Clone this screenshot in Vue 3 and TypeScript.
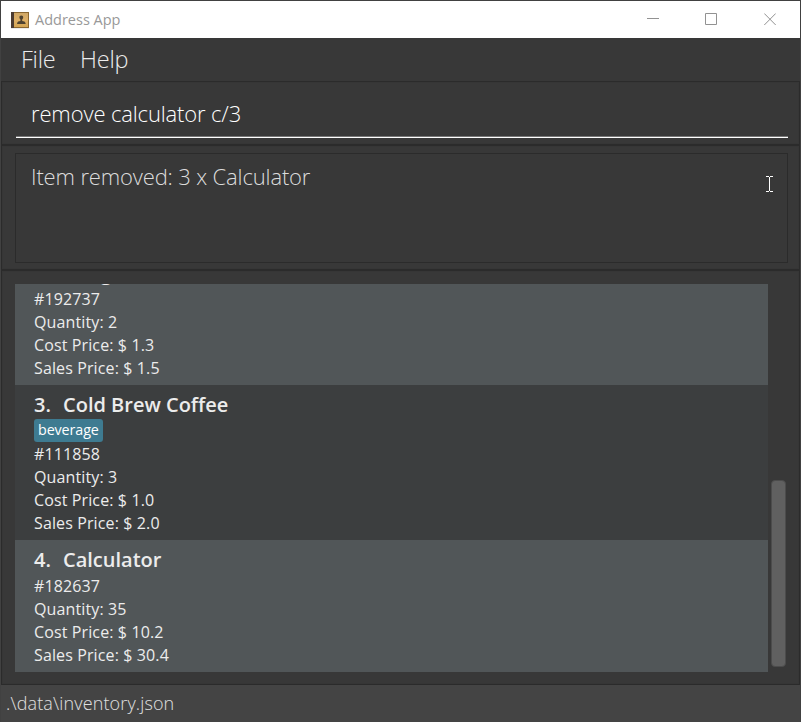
<script setup lang="ts">
interface Item {
  index: number
  name: string
  tags: string[]
  id: string
  quantity: number
  cost: string
  sales: string
}

const menus: string[] = ['File', 'Help']
const command = 'remove calculator c/3'
const result = 'Item removed: 3 x Calculator'
const savePath = '.\\data\\inventory.json'

const items: Item[] = [
  { index: 2, name: 'Bang', tags: [], id: '192737', quantity: 2, cost: '1.3', sales: '1.5' },
  { index: 3, name: 'Cold Brew Coffee', tags: ['beverage'], id: '111858', quantity: 3, cost: '1.0', sales: '2.0' },
  { index: 4, name: 'Calculator', tags: [], id: '182637', quantity: 35, cost: '10.2', sales: '30.4' },
]
</script>

<template>
  <div class="window">
    <header class="titlebar">
      <svg class="app-icon" width="18" height="17" viewBox="0 0 18 17">
        <defs>
          <linearGradient id="cover" x1="0" y1="0" x2="0" y2="1">
            <stop offset="0" stop-color="#cfa766" />
            <stop offset="0.5" stop-color="#deb067" />
            <stop offset="1" stop-color="#d3a452" />
          </linearGradient>
        </defs>
        <rect x="0" y="15.5" width="18" height="1" fill="#d8d8d8" />
        <rect x="0" y="0" width="18" height="16" fill="#8a6630" />
        <rect x="0" y="0" width="3" height="16" fill="#4b3b31" />
        <rect x="3" y="1" width="14" height="14" fill="url(#cover)" />
        <path d="M10.300 3.500c1.400 0 2 .9 1.900 2.100-.1 1-.6 1.500-1 2v1.500c1.500.2 3.300.4 3.500 2.900H6c.2-2.500 1.900-2.700 3.400-2.900V7.600c-.4-.5-.9-1-1-2-.1-1.200.5-2.100 1.900-2.100z" fill="#4e4230" />
      </svg>
      <span class="title">Address App</span>
      <div class="controls">
        <svg width="12" height="13" viewBox="0 0 12 13"><path d="M0 5.500h12" /></svg>
        <svg width="12" height="13" viewBox="0 0 12 13"><path d="M.5.500h11v11H.5z" /></svg>
        <svg width="12" height="13" viewBox="0 0 12 13"><path d="M.3.500l11.400 11.500M11.700.500L.3 12" /></svg>
      </div>
    </header>

    <nav class="menubar">
      <span v-for="menu in menus" :key="menu" class="menu">{{ menu }}</span>
    </nav>

    <section class="command-pane">
      <div class="command">{{ command }}</div>
    </section>

    <section class="result-pane">
      <div class="result">
        <span class="result-text">{{ result }}</span>
        <svg class="caret" width="7" height="16" viewBox="0 0 7 16">
          <path d="M0 .500h3M4 .500h3M3.500 1v14M0 15.500h3M4 15.500h3" />
        </svg>
      </div>
    </section>

    <main class="list-pane">
      <div class="list">
        <article v-for="item in items" :key="item.index" class="card" :class="{ even: item.index % 2 === 0 }">
          <h2 class="name"><span class="index">{{ item.index }}.</span><span>{{ item.name }}</span></h2>
          <div v-if="item.tags.length" class="tags">
            <span v-for="tag in item.tags" :key="tag" class="tag">{{ tag }}</span>
          </div>
          <p>#{{ item.id }}</p>
          <p>Quantity: {{ item.quantity }}</p>
          <p>Cost Price: $ {{ item.cost }}</p>
          <p>Sales Price: $ {{ item.sales }}</p>
        </article>
      </div>
      <div class="scrollbar"><div class="thumb"></div></div>
    </main>

    <footer class="statusbar">{{ savePath }}</footer>
  </div>
</template>

<style>
body {
  margin: 0;
  overflow: hidden;
}
</style>

<style scoped>
.window {
  box-sizing: border-box;
  display: flex;
  flex-direction: column;
  width: 801px;
  height: 722px;
  border: 1px solid #414141;
  border-bottom: 0;
  background: #383838;
  color: #ececec;
  font-family: 'Open Sans', 'Noto Sans', sans-serif;
  white-space: nowrap;
}
.titlebar {
  display: flex;
  align-items: center;
  flex: none;
  height: 37px;
  padding: 0 24px 0 10px;
  background: #fff;
}
.app-icon {
  margin-top: 1px;
}
.title {
  margin: -1px 0 0 6px;
  color: #999;
  font-size: 14.500px;
}
.controls {
  display: flex;
  gap: 46px;
  margin-left: auto;
}
.controls svg:last-child {
  margin-left: 1px;
}
.controls path {
  fill: none;
  stroke: #929292;
  stroke-width: 1;
}
.menubar {
  display: flex;
  flex: none;
  gap: 24.500px;
  height: 43px;
  padding-left: 20px;
  font-size: 23.500px;
  font-weight: 300;
  letter-spacing: -0.2px;
  line-height: 43px;
}
.command-pane,
.result-pane,
.list-pane {
  box-sizing: border-box;
  flex: none;
  border: 1px solid #2b2b2b;
  box-shadow: inset 0 0 1px #303030;
}
.command-pane {
  height: 64px;
  padding: 9px 11px 0 14px;
}
.command {
  box-sizing: border-box;
  height: 47px;
  padding-left: 15px;
  border-bottom: 1px solid #fff;
  box-shadow: inset 0 -1px #777;
  color: #fff;
  font-size: 22px;
  font-weight: 300;
  letter-spacing: -0.14px;
  line-height: 45px;
}
.result-pane {
  height: 125px;
  padding: 7px 11px 0 13px;
}
.result {
  box-sizing: border-box;
  display: flex;
  justify-content: space-between;
  height: 110px;
  padding: 8px 14px 0 15px;
  border: 1px solid #2b2b2b;
  font-size: 22px;
  font-weight: 300;
  letter-spacing: -0.15px;
  line-height: 28px;
}
.result-text {
  color: #dcdcdc;
}
.caret {
  margin-top: 14px;
}
.caret path {
  fill: none;
  stroke: #fff;
}
.list-pane {
  display: flex;
  height: 415px;
  padding: 13px 0 12px 13px;
}
.list {
  display: flex;
  flex-direction: column;
  justify-content: flex-end;
  width: 753px;
  height: 388px;
  overflow: hidden;
}
.card {
  flex: none;
  box-sizing: border-box;
  padding: 5px 19px;
  background: #3c3e3f;
}
.card.even {
  background: #515658;
}
.name {
  display: flex;
  height: 30px;
  margin: 0;
  font-size: 20px;
  font-weight: 600;
  line-height: 30px;
}
.index {
  width: 29px;
}
.card p {
  margin: 0;
  font-size: 16px;
  letter-spacing: 0.12px;
  line-height: 23px;
}
.tags {
  display: flex;
  height: 23px;
}
.tag {
  height: 23px;
  margin-top: -1px;
  padding: 0 4px;
  border-radius: 3px;
  background: #3e7b91;
  color: #fff;
  font-size: 14.300px;
  letter-spacing: -0.1px;
  line-height: 22px;
}
.scrollbar {
  display: flex;
  align-items: flex-end;
  padding: 0 0 5px 3px;
}
.thumb {
  width: 13px;
  height: 185px;
  border: 0.500px solid #4c4c4c;
  border-radius: 4px;
  background: #606060;
}
.statusbar {
  flex: 1;
  padding-left: 5px;
  background: #444;
  color: #e0e0e0;
  font-size: 18px;
  font-weight: 300;
  letter-spacing: 0.13px;
  line-height: 37px;
}
</style>
